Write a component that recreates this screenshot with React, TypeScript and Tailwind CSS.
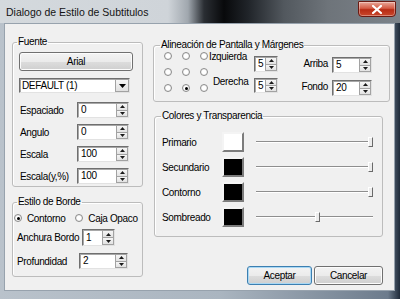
import React from "react";

function Tri({ up }: { up?: boolean }) {
  return (
    <svg width="5" height="3" viewBox="0 0 5 3" className="block">
      <polygon points={up ? "2.5,0 5,3 0,3" : "0,0 5,0 2.5,3"} fill="#1a1a1a" />
    </svg>
  );
}

function Arrows() {
  return (
    <div className="flex flex-col w-[12px] shrink-0 h-full">
      <span className="flex-1 flex items-center justify-center border border-[#a2a2a2] bg-[linear-gradient(#f6f6f6,#e2e2e2)]">
        <Tri up />
      </span>
      <span className="flex-1 flex items-center justify-center border border-t-0 border-[#a2a2a2] bg-[linear-gradient(#f6f6f6,#e2e2e2)]">
        <Tri />
      </span>
    </div>
  );
}

function Spin({ value, className }: { value: string; className: string }) {
  return (
    <div
      className={`flex shrink-0 bg-white border border-t-[#6f6f6f] border-l-[#6f6f6f] border-b-[#e2e2e2] border-r-[#e2e2e2] shadow-[inset_1px_1px_0_#a8a8a8] ${className}`}
    >
      <span className="flex-1 min-w-0 overflow-hidden pl-[3px] flex items-center leading-[12px]">{value}</span>
      <Arrows />
    </div>
  );
}

function Radio({ on }: { on?: boolean }) {
  return (
    <span className="w-[8px] h-[8px] shrink-0 rounded-full border border-[#8c8c8c] bg-[radial-gradient(circle,#ffffff_40%,#dcdcdc)] flex items-center justify-center">
      {on && <span className="w-[3px] h-[3px] rounded-full bg-black" />}
    </span>
  );
}

function Swatch({ fill }: { fill: string }) {
  return (
    <span
      className={`w-[22px] h-[20px] shrink-0 border-2 border-t-[#f4f4f4] border-l-[#f4f4f4] border-b-[#7c7c7c] border-r-[#7c7c7c] ${fill}`}
    />
  );
}

function Slider({ thumb }: { thumb: string }) {
  return (
    <div className="relative w-[117px] h-[20px] ml-[12px]">
      <div className="absolute left-0 right-0 top-[9px] h-[2px] border-t border-t-[#8e8e8e] border-b border-b-white" />
      <div
        className={`absolute top-[5px] w-[5px] h-[10px] bg-[#ececec] border border-t-white border-l-white border-b-[#6a6a6a] border-r-[#6a6a6a] ${thumb}`}
      />
    </div>
  );
}

const fieldset = "border border-[#bcbcbc] rounded-[3px] shadow-[inset_1px_1px_0_#ffffff]";
const legend = "leading-[12px] px-[1px] whitespace-nowrap";

const colorRows = [
  { label: "Primario", fill: "bg-white", thumb: "right-[0px]" },
  { label: "Secundario", fill: "bg-black", thumb: "right-[0px]" },
  { label: "Contorno", fill: "bg-black", thumb: "right-[0px]" },
  { label: "Sombreado", fill: "bg-black", thumb: "left-[59px]" },
];

const fontRows = [
  { label: "Espaciado", value: "0" },
  { label: "Angulo", value: "0" },
  { label: "Escala", value: "100" },
  { label: "Escala(y,%)", value: "100" },
];

export default function App() {
  return (
    <div className="w-[400px] h-[299px] overflow-hidden flex flex-col bg-[linear-gradient(to_right,#b9c2cb,#aab5c0_55%,#6c7b8c_97%,#1f2b3a)] font-['Liberation_Sans',Arial,sans-serif] text-[10px] tracking-[-0.35px] text-black whitespace-nowrap">
      {/* title bar */}
      <div className="h-[23px] shrink-0 flex items-center relative bg-[linear-gradient(to_right,#d4d9dd_0%,#cfd4d9_42%,#a0a7ae_47%,#2a2e33_51%,#08090b_56%,#202429_62%,#52585e_71%,#6e747a_82%,#7c838a_100%)]">
        <span className="ml-[6px] text-[10.5px] tracking-normal text-[#141414] leading-[12px]">Dialogo de Estilo de Subtitulos</span>
        <span className="absolute right-[4px] top-[1px] w-[38px] h-[16px] rounded-b-[4px] rounded-t-[1px] border border-[#6b1a12] bg-[linear-gradient(#e8a89a,#d45a44_45%,#b72b14_55%,#c9472c)] flex items-center justify-center shadow-[inset_0_0_0_1px_rgba(255,255,255,0.35)]">
          <svg width="10" height="9" viewBox="0 0 10 9">
            <path d="M1 1 L9 8 M9 1 L1 8" stroke="#ffffff" strokeWidth="2.2" strokeLinecap="square" />
          </svg>
        </span>
      </div>

      {/* client area */}
      <div className="flex-1 ml-[4px] mr-[5px] mb-[8px] bg-[#f0f0f0] border border-[#97a2ad] flex">
        {/* left column */}
        <div className="ml-[7px] w-[131px] shrink-0 flex flex-col">
          <fieldset className={`mt-[12px] ${fieldset} pb-[2px]`}>
            <legend className={`ml-[4px] ${legend}`}>Fuente</legend>
            <div className="mt-[4px] ml-[6px] w-[114px] h-[19px] rounded-[3px] border border-[#707070] bg-[linear-gradient(#f3f3f3,#ebebeb_50%,#dddddd_51%,#cfcfcf)] flex items-center justify-center shadow-[inset_0_0_0_1px_#fcfcfc]">
              Arial
            </div>
            <div className="mt-[7px] ml-[6px] w-[111px] h-[15px] flex bg-white border border-t-[#6f6f6f] border-l-[#6f6f6f] border-b-[#e2e2e2] border-r-[#e2e2e2] shadow-[inset_1px_1px_0_#a8a8a8]">
              <span className="flex-1 pl-[2px] flex items-center">DEFAULT (1)</span>
              <span className="w-[14px] border border-[#a2a2a2] bg-[linear-gradient(#f6f6f6,#e0e0e0)] flex items-center justify-center">
                <svg width="7" height="4" viewBox="0 0 7 4">
                  <polygon points="0,0 7,0 3.5,4" fill="#000" />
                </svg>
              </span>
            </div>
            <div className="mt-[9px] flex flex-col gap-[6px]">
              {fontRows.map((r) => (
                <div key={r.label} className="flex items-center">
                  <span className="ml-[7px] w-[57px] shrink-0">{r.label}</span>
                  <Spin value={r.value} className="w-[52px] h-[16px]" />
                </div>
              ))}
            </div>
          </fieldset>

          <fieldset className={`mt-[9px] ${fieldset} pb-[7px]`}>
            <legend className={`ml-[4px] ${legend}`}>Estilo de Borde</legend>
            <div className="mt-[4px] h-[12px] flex items-center">
              <span className="ml-[1px]">
                <Radio on />
              </span>
              <span className="ml-[5px]">Contorno</span>
              <span className="ml-[10px]">
                <Radio />
              </span>
              <span className="ml-[5px]">Caja Opaco</span>
            </div>
            <div className="mt-[5px] flex items-center">
              <span className="ml-[4px] w-[65px] shrink-0">Anchura Bordo</span>
              <Spin value="1" className="w-[33px] h-[17px]" />
            </div>
            <div className="mt-[7px] flex items-center">
              <span className="ml-[4px] w-[62px] shrink-0">Profundidad</span>
              <Spin value="2" className="w-[49px] h-[16px]" />
            </div>
          </fieldset>
        </div>

        {/* right column */}
        <div className="ml-[10px] w-[237px] shrink-0 flex flex-col">
          <fieldset className={`mt-[15px] ${fieldset} h-[63px]`}>
            <legend className={`ml-[6px] ${legend}`}>Alineación de Pantalla y Márgenes</legend>
            <div className="flex items-start">
              <div className="ml-[10px] mt-[1px] grid grid-cols-3 gap-x-[10px] gap-y-[8px]">
                <Radio />
                <Radio />
                <Radio />
                <Radio />
                <Radio />
                <Radio />
                <Radio />
                <Radio on />
                <Radio />
              </div>
              <div className="ml-[1px] flex flex-col">
                <div className="flex items-start h-[22px]">
                  <span className="w-[45px] leading-[12px]">Izquierda</span>
                  <Spin value="5" className="mt-[5px] w-[24px] h-[16px]" />
                </div>
                <div className="flex items-start">
                  <span className="ml-[4px] mt-[3px] w-[41px] leading-[12px]">Derecha</span>
                  <Spin value="5" className="mt-[5px] w-[24px] h-[15px]" />
                </div>
              </div>
              <div className="flex flex-col">
                <div className="mt-[5px] flex items-center">
                  <span className="w-[50px] text-right pb-[3px]">Arriba</span>
                  <Spin value="5" className="ml-[4px] w-[40px] h-[16px]" />
                </div>
                <div className="mt-[5px] flex items-center">
                  <span className="w-[50px] text-right pb-[3px]">Fondo</span>
                  <Spin value="20" className="ml-[4px] w-[40px] h-[16px]" />
                </div>
              </div>
            </div>
          </fieldset>

          <fieldset className={`mt-[8px] ml-[1px] w-[229px] ${fieldset} pb-[9px]`}>
            <legend className={`ml-[6px] ${legend}`}>Colores y Transparencia</legend>
            <div className="mt-[10px] flex flex-col gap-[5px]">
              {colorRows.map((r) => (
                <div key={r.label} className="flex items-center">
                  <span className="ml-[7px] w-[60px] shrink-0">{r.label}</span>
                  <Swatch fill={r.fill} />
                  <Slider thumb={r.thumb} />
                </div>
              ))}
            </div>
          </fieldset>

          <div className="mt-auto mb-[5px] mr-[7px] flex justify-end gap-[2px]">
            <span className="w-[65px] h-[19px] rounded-[3px] border border-[#3c7fb1] bg-[linear-gradient(#f3f3f3,#ebebeb_50%,#dddddd_51%,#cfcfcf)] shadow-[inset_0_0_0_1px_#a9d8f4] flex items-center justify-center">
              Aceptar
            </span>
            <span className="w-[69px] h-[19px] rounded-[3px] border border-[#707070] bg-[linear-gradient(#f3f3f3,#ebebeb_50%,#dddddd_51%,#cfcfcf)] shadow-[inset_0_0_0_1px_#fcfcfc] flex items-center justify-center">
              Cancelar
            </span>
          </div>
        </div>
      </div>
    </div>
  );
}
